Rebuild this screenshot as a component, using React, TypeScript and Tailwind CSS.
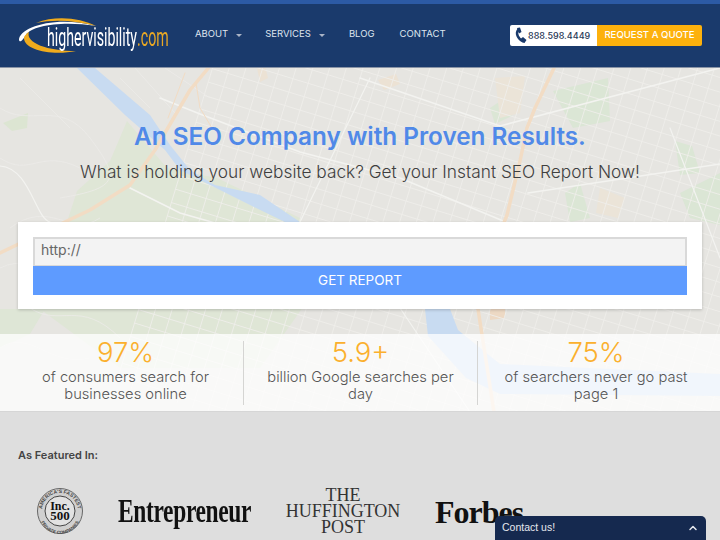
import React from 'react';
import { ChevronUp } from 'lucide-react';

const navItems = [
  { label: 'ABOUT', caret: true, className: 'mr-[23px]' },
  { label: 'SERVICES', caret: true, className: 'mr-[24px]' },
  { label: 'BLOG', caret: false, className: 'mr-[25px]' },
  { label: 'CONTACT', caret: false, className: '' },
];

const stats = [
  { value: '97%', text: 'of consumers search for businesses online', className: 'w-[243px] pl-[38px] pr-[30px]' },
  { value: '5.9+', text: 'billion Google searches per day', className: 'w-[234px] px-[18px] border-l border-[#d5d5d3]' },
  { value: '75%', text: 'of searchers never go past page 1', className: 'w-[243px] pl-[22px] pr-[28px] border-l border-[#d5d5d3]' },
];

const range = (from: number, to: number, step: number) => {
  const out: number[] = [];
  for (let v = from; v <= to; v += step) out.push(v);
  return out;
};

const MapBackground = () => (
  <svg
    className="absolute inset-0 w-full h-full blur-[0.6px]"
    viewBox="0 0 720 344"
    preserveAspectRatio="none"
    fill="none"
  >
    <rect width="720" height="344" fill="#e6e5e1" />
    {/* parks */}
    <path d="M127 53 L167 100 L217 110 L300 150 L320 215 L260 300 L120 300 L40 241 L67 154 L77 123 L110 93Z" fill="#dfe6d6" />
    <path d="M3 55 L28 45 L27 60 L12 63Z" fill="#dce5d2" />
    <path d="M0 241 L45 241 L30 266 L0 280Z" fill="#dee6d6" />
    <path d="M553 23 L608 10 L610 53 L573 60Z" fill="#dbe6d5" />
    <path d="M675 73 L692 78 L700 105 L680 107Z M680 125 L720 105 L720 157 L690 150Z" fill="#dbe6d5" />
    <path d="M565 125 L580 115 L590 150 L570 154Z M490 40 L505 30 L512 48 L495 56Z" fill="#dbe6d5" />
    <path d="M495 10 L525 8 L520 45 L500 50Z M600 120 L625 130 L618 150 L596 145Z" fill="#ebe4d8" />
    <path d="M257 0 L265 -2 L268 10 L260 14Z M378 12 L396 6 L400 16 L384 22Z" fill="#ece2d4" />
    <path d="M490 241 L505 241 L505 250 L490 252Z" fill="#edd9c4" />

    {/* street grid, east side */}
    <g stroke="#efeeeb" strokeWidth="0.8" transform="rotate(17 500 120)">
      {range(-120, 420, 14).map((y) => (
        <line key={y} x1="190" y1={y} x2="900" y2={y} />
      ))}
      {range(190, 900, 16).map((x) => (
        <line key={x} x1={x} y1="-140" x2={x} y2="420" />
      ))}
    </g>
    {/* street grid, west side */}
    <g stroke="#ecebe8" strokeWidth="0.8">
      <path d="M0 40 C30 60 60 30 90 70 S120 120 60 130 M10 160 C50 130 70 170 100 150 M0 90 C30 110 40 80 80 100 M20 10 L70 60 M0 200 C40 180 70 230 110 200 M30 240 C60 260 80 230 120 270 M0 280 C30 260 50 300 90 290" />
      <path d="M120 10 L150 40 M135 0 L175 45 M165 0 L210 30" />
    </g>

    {/* river */}
    <path d="M77 0 L95 0 L150 47 L170 77 L190 102 L215 117 L260 127 L300 154 L400 210 L450 241 L458 262 L500 296 L720 306 L720 328 L500 326 L466 310 L428 268 L425 241 L380 222 L285 154 L250 137 L210 117 L180 102 L165 82 L125 47Z" fill="#c8dbf1" />

    {/* main roads */}
    <g stroke="#f3f3f0" strokeLinecap="round">
      <path d="M160 30 L200 46 L300 84 L400 110 L520 160" strokeWidth="1.6" />
      <path d="M360 10 L500 58 L720 0" strokeWidth="1.6" />
      <path d="M528 125 L720 96" strokeWidth="1.6" />
      <path d="M670 60 L720 190" strokeWidth="1.2" />
      <path d="M300 154 L370 10" strokeWidth="1.2" />
      <path d="M130 120 L180 145 L250 165" strokeWidth="1.6" />
      <path d="M0 98 C30 100 35 150 50 154" strokeWidth="1.2" />
      <path d="M400 240 L470 344" strokeWidth="1.2" />
    </g>

    {/* highways */}
    <g stroke="#f2dcc4" strokeLinecap="round" strokeLinejoin="round" fill="none">
      <path d="M210 -2 L190 22 L155 82 L130 117 L90 142 L0 185" strokeWidth="3.5" />
      <path d="M555 -2 L535 40 L527 60 L520 93 L507 147 L480 215 L478 241 L494 344" strokeWidth="3.5" />
      <path d="M185 5 L168 50 M196 15 L200 40 L212 60" strokeWidth="1" />
    </g>
  </svg>
);

const Logo = () => (
  <div className="relative w-[152px] h-[40px] shrink-0">
    <svg className="absolute left-0 top-0" width="82" height="40" viewBox="0 0 82 40" fill="none">
      <path d="M1 24 C1 12 36 -1 78 10 C46 5 14 9 8 19 C6 22 2 28 1 24Z" fill="#ffffff" />
      <path d="M18 7 C38 -1 62 2 78 10 C58 5 38 3 18 7Z" fill="#f0ab1d" />
      <path d="M11 16 C7 27 30 35 58 35 C34 40 6 34 6 22 C6 20 9 17 11 16Z" fill="#f0ab1d" />
    </svg>
    <div className="absolute left-[29px] top-[4px] flex items-baseline text-[25px] leading-[36px] origin-left scale-x-[0.566] whitespace-nowrap font-['Roboto',sans-serif]">
      <span className="text-white">highervisibility</span>
      <span className="text-[#e9a825]">.com</span>
    </div>
  </div>
);

const IncBadge = () => (
  <svg width="48" height="48" viewBox="0 0 48 48" className="shrink-0">
    <defs>
      <path id="incTop" d="M6 24 A18 18 0 0 1 42 24" />
      <path id="incBottom" d="M3 26 A21 21 0 0 0 45 26" />
    </defs>
    <circle cx="24" cy="24" r="22.5" fill="#d0d0d0" stroke="#666" strokeWidth="1" />
    <circle cx="24" cy="24" r="15" fill="#e2e2e2" stroke="#444" strokeWidth="1" />
    <text fontSize="5" fill="#444" fontFamily="'Liberation Sans', sans-serif" fontWeight="700">
      <textPath href="#incTop" startOffset="50%" textAnchor="middle">AMERICA'S FASTEST</textPath>
    </text>
    <text fontSize="4.5" fill="#444" fontFamily="'Liberation Sans', sans-serif" fontWeight="700">
      <textPath href="#incBottom" startOffset="50%" textAnchor="middle">PRIVATE COMPANIES</textPath>
    </text>
    <text x="24" y="23" textAnchor="middle" fontSize="12" fontWeight="700" fill="#111" fontFamily="'Liberation Serif', serif">Inc.</text>
    <text x="24" y="33" textAnchor="middle" fontSize="13" fontWeight="700" fill="#111" fontFamily="'Liberation Serif', serif">500</text>
  </svg>
);

export default function App() {
  return (
    <div className="relative w-[720px] h-[540px] overflow-hidden bg-[#dedede] font-['Inter',sans-serif]">
      <header className="h-[68px] bg-[#1a3a6c] border-t-4 border-[#2c5aa5] border-b border-b-[#8a94a6] flex items-center pl-[18px] pr-[18px]">
        <Logo />
        <nav className="ml-[25px] flex items-center text-[9.5px] text-[#dfe5ef] -mt-[2px]">
          {navItems.map((item) => (
            <div key={item.label} className={`flex items-center ${item.className}`}>
              <span>{item.label}</span>
              {item.caret && (
                <span className="ml-[8px] mt-[1px] w-0 h-0 border-x-[3px] border-x-transparent border-t-[3px] border-t-[#aab4c6]" />
              )}
            </div>
          ))}
        </nav>
        <div className="ml-auto flex h-[21px] rounded-[2px] overflow-hidden font-medium">
          <div className="w-[87px] bg-white flex items-center pl-[4px] text-[9px] text-[#2b3a58]">
            <svg width="13" height="17" viewBox="0 0 13 17" fill="none" className="mr-[1px] shrink-0">
              <path d="M4.5 2.5 C1.5 6 3.5 12 9.5 14.5" stroke="#1a3a6c" strokeWidth="2.6" strokeLinecap="round" />
              <path d="M3 1 L6 .5 L7.5 5 L5 6.5Z M7 11.5 L9 10 L12.5 13 L10.5 16Z" fill="#1a3a6c" />
            </svg>
            <span>888.598.4449</span>
          </div>
          <div className="w-[105px] bg-[#fdb10d] text-white text-[9.6px] flex items-center justify-center whitespace-nowrap">
            REQUEST A QUOTE
          </div>
        </div>
      </header>

      <main className="relative h-[344px]">
        <MapBackground />
        <section className="relative h-[266px] flex flex-col items-center pt-[54px]">
          <h1 className="text-[24.3px] leading-[28px] font-semibold text-[#5089e8]">
            An SEO Company with Proven Results.
          </h1>
          <p className="mt-[10px] text-[17.3px] leading-[24px] font-light text-[#3f3f3f]">
            What is holding your website back? Get your Instant SEO Report Now!
          </p>
          <div className="mt-[38px] w-[684px] h-[87px] bg-white p-[15px] shadow-[0_1px_3px_rgba(0,0,0,0.2)]">
            <div className="h-[29px] bg-[#f3f3f3] border-2 border-[#d9d9d9] border-b-[1px] flex items-center pl-[6px] pb-[6px] text-[14px] text-[#666]">
              http://
            </div>
            <button className="w-full h-[29px] bg-[#5e9bff] text-white text-[13.5px]">
              GET REPORT
            </button>
          </div>
        </section>
        <section className="relative h-[78px] bg-[#ffffff]/75 flex items-center border-b border-[#d6d6d6]">
          {stats.map((stat) => (
            <div key={stat.value} className={`h-[64px] flex flex-col items-center text-center ${stat.className}`}>
              <div className="text-[27.5px] leading-[22px] font-light text-[#fbb02d]">{stat.value}</div>
              <div className="mt-[6px] text-[14.7px] leading-[17px] font-light text-[#555]">{stat.text}</div>
            </div>
          ))}
        </section>
      </main>

      <section className="pl-[18px] pt-[36px]">
        <h2 className="text-[11px] leading-[14px] font-semibold text-[#444]">As Featured In:</h2>
        <div className="mt-[25px] flex items-center pl-[18px]">
          <IncBadge />
          <div className="ml-[34px] text-[34px] leading-[36px] font-bold tracking-[-0.5px] scale-x-[0.69] origin-left text-[#111] font-['Liberation_Serif',serif] w-[168px]">
            Entrepreneur
          </div>
          <div className="flex flex-col items-center w-[114px] text-[18px] leading-[16px] text-[#333] font-['Liberation_Serif',serif]">
            <span>THE</span>
            <span className="whitespace-nowrap">HUFFINGTON</span>
            <span>POST</span>
          </div>
          <div className="ml-[35px] mt-[1px] text-[32px] leading-[36px] font-bold tracking-[-1px] text-[#111] font-['Liberation_Serif',serif]">
            Forbes
          </div>
        </div>
      </section>

      <div className="absolute left-[495px] bottom-0 w-[211px] h-[24px] bg-[#15294f] rounded-t-[5px] flex items-center justify-between pl-[7px] pr-[7px] text-[10.5px] text-[#e5e8ee] font-['Liberation_Sans',sans-serif]">
        <span>Contact us!</span>
        <ChevronUp size={12} strokeWidth={3} />
      </div>
    </div>
  );
}
